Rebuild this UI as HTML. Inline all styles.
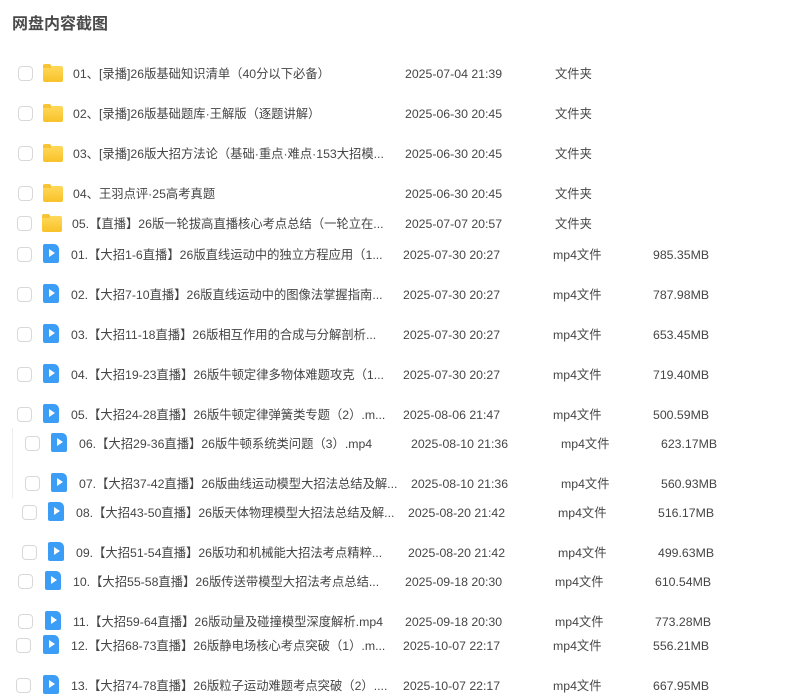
<!DOCTYPE html><html><head><meta charset="utf-8"><style>
body{margin:0;width:799px;height:690px;overflow:hidden;background:#fff;font-family:"Liberation Sans","Noto Sans CJK SC",sans-serif;color:#454545;font-size:12.3px;position:relative}
.t{position:absolute;left:12px;top:10px;font-size:16px;font-weight:bold;color:#4a4a4a}
.r{position:absolute;left:0;width:799px;height:20px}
.r>*{position:absolute;top:1px;line-height:20px;white-space:nowrap}
.cb{width:13px;height:13px;border:1px solid #d8d8d8;border-radius:4px;top:3px!important}
.f{width:20px;height:16px;top:3px!important;background:linear-gradient(#ffd85a,#f8c228);border-radius:2px}
.f:before{content:"";position:absolute;left:0;top:-2px;width:8px;height:4px;background:#f6c434;border-radius:2px 2px 0 0}
.v{width:16px;height:19px;top:0!important;background:#3b9df5;border-radius:2px 5px 2px 2px}
.v:after{content:"";position:absolute;left:6px;top:5px;border-left:6px solid #fff;border-top:4.5px solid transparent;border-bottom:4.5px solid transparent}
</style></head><body>
<div class="t">网盘内容截图</div>
<div style="position:absolute;left:12px;top:428px;width:1px;height:70px;background:#eee"></div>

<div class="r" style="top:63px"><span class="cb" style="left:18px"></span><span class="f" style="left:43px"></span><span style="left:73px">01、[录播]26版基础知识清单（40分以下必备）</span><span style="left:405px">2025-07-04 21:39</span><span style="left:555px">文件夹</span></div>
<div class="r" style="top:103px"><span class="cb" style="left:18px"></span><span class="f" style="left:43px"></span><span style="left:73px">02、[录播]26版基础题库·王解版（逐题讲解）</span><span style="left:405px">2025-06-30 20:45</span><span style="left:555px">文件夹</span></div>
<div class="r" style="top:143px"><span class="cb" style="left:18px"></span><span class="f" style="left:43px"></span><span style="left:73px">03、[录播]26版大招方法论（基础·重点·难点·153大招模...</span><span style="left:405px">2025-06-30 20:45</span><span style="left:555px">文件夹</span></div>
<div class="r" style="top:183px"><span class="cb" style="left:18px"></span><span class="f" style="left:43px"></span><span style="left:73px">04、王羽点评·25高考真题</span><span style="left:405px">2025-06-30 20:45</span><span style="left:555px">文件夹</span></div>
<div class="r" style="top:213px"><span class="cb" style="left:17px"></span><span class="f" style="left:42px"></span><span style="left:72px">05.【直播】26版一轮拔高直播核心考点总结（一轮立在...</span><span style="left:405px">2025-07-07 20:57</span><span style="left:555px">文件夹</span></div>

<div class="r" style="top:244px"><span class="cb" style="left:17px"></span><span class="v" style="left:43px"></span><span style="left:71px">01.【大招1-6直播】26版直线运动中的独立方程应用（1...</span><span style="left:403px">2025-07-30 20:27</span><span style="left:553px">mp4文件</span><span style="left:653px">985.35MB</span></div>
<div class="r" style="top:284px"><span class="cb" style="left:17px"></span><span class="v" style="left:43px"></span><span style="left:71px">02.【大招7-10直播】26版直线运动中的图像法掌握指南...</span><span style="left:403px">2025-07-30 20:27</span><span style="left:553px">mp4文件</span><span style="left:653px">787.98MB</span></div>
<div class="r" style="top:324px"><span class="cb" style="left:17px"></span><span class="v" style="left:43px"></span><span style="left:71px">03.【大招11-18直播】26版相互作用的合成与分解剖析...</span><span style="left:403px">2025-07-30 20:27</span><span style="left:553px">mp4文件</span><span style="left:653px">653.45MB</span></div>
<div class="r" style="top:364px"><span class="cb" style="left:17px"></span><span class="v" style="left:43px"></span><span style="left:71px">04.【大招19-23直播】26版牛顿定律多物体难题攻克（1...</span><span style="left:403px">2025-07-30 20:27</span><span style="left:553px">mp4文件</span><span style="left:653px">719.40MB</span></div>
<div class="r" style="top:404px"><span class="cb" style="left:17px"></span><span class="v" style="left:43px"></span><span style="left:71px">05.【大招24-28直播】26版牛顿定律弹簧类专题（2）.m...</span><span style="left:403px">2025-08-06 21:47</span><span style="left:553px">mp4文件</span><span style="left:653px">500.59MB</span></div>
<div class="r" style="top:433px"><span class="cb" style="left:25px"></span><span class="v" style="left:51px"></span><span style="left:79px">06.【大招29-36直播】26版牛顿系统类问题（3）.mp4</span><span style="left:411px">2025-08-10 21:36</span><span style="left:561px">mp4文件</span><span style="left:661px">623.17MB</span></div>
<div class="r" style="top:473px"><span class="cb" style="left:25px"></span><span class="v" style="left:51px"></span><span style="left:79px">07.【大招37-42直播】26版曲线运动模型大招法总结及解...</span><span style="left:411px">2025-08-10 21:36</span><span style="left:561px">mp4文件</span><span style="left:661px">560.93MB</span></div>
<div class="r" style="top:502px"><span class="cb" style="left:22px"></span><span class="v" style="left:48px"></span><span style="left:76px">08.【大招43-50直播】26版天体物理模型大招法总结及解...</span><span style="left:408px">2025-08-20 21:42</span><span style="left:558px">mp4文件</span><span style="left:658px">516.17MB</span></div>
<div class="r" style="top:542px"><span class="cb" style="left:22px"></span><span class="v" style="left:48px"></span><span style="left:76px">09.【大招51-54直播】26版功和机械能大招法考点精粹...</span><span style="left:408px">2025-08-20 21:42</span><span style="left:558px">mp4文件</span><span style="left:658px">499.63MB</span></div>
<div class="r" style="top:571px"><span class="cb" style="left:18px"></span><span class="v" style="left:45px"></span><span style="left:73px">10.【大招55-58直播】26版传送带模型大招法考点总结...</span><span style="left:405px">2025-09-18 20:30</span><span style="left:555px">mp4文件</span><span style="left:655px">610.54MB</span></div>
<div class="r" style="top:611px"><span class="cb" style="left:18px"></span><span class="v" style="left:45px"></span><span style="left:73px">11.【大招59-64直播】26版动量及碰撞模型深度解析.mp4</span><span style="left:405px">2025-09-18 20:30</span><span style="left:555px">mp4文件</span><span style="left:655px">773.28MB</span></div>
<div class="r" style="top:635px"><span class="cb" style="left:16px"></span><span class="v" style="left:43px"></span><span style="left:71px">12.【大招68-73直播】26版静电场核心考点突破（1）.m...</span><span style="left:403px">2025-10-07 22:17</span><span style="left:553px">mp4文件</span><span style="left:653px">556.21MB</span></div>
<div class="r" style="top:675px"><span class="cb" style="left:16px"></span><span class="v" style="left:43px"></span><span style="left:71px">13.【大招74-78直播】26版粒子运动难题考点突破（2）....</span><span style="left:403px">2025-10-07 22:17</span><span style="left:553px">mp4文件</span><span style="left:653px">667.95MB</span></div>
</body></html>
